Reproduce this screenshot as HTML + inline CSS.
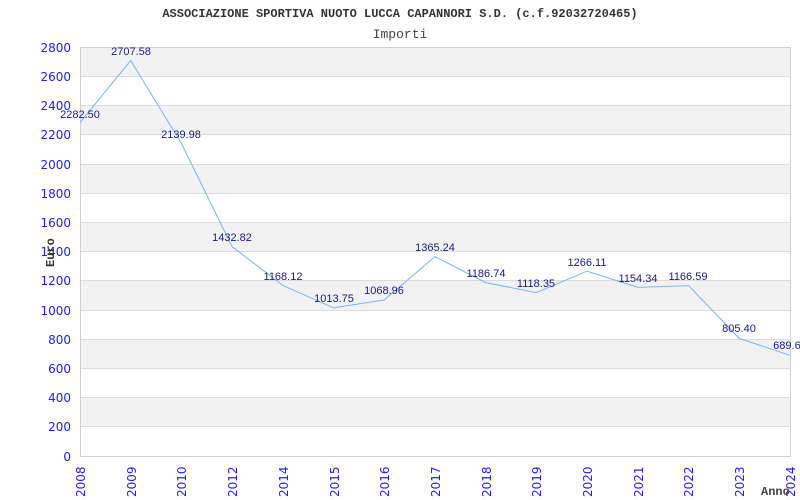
<!DOCTYPE html>
<html><head><meta charset="utf-8"><style>
html,body{margin:0;padding:0;background:#fff;width:800px;height:500px;overflow:hidden}
svg{display:block}
.yl{font:12px "DejaVu Sans","Liberation Sans",sans-serif;fill:#2020f0;text-anchor:end}
.xl{font:12px "DejaVu Sans","Liberation Sans",sans-serif;fill:#2020f0}
.dl{font:11px "Liberation Sans",sans-serif;fill:#1a1a80;text-anchor:middle}
</style></head><body>
<svg width="800" height="500" xmlns="http://www.w3.org/2000/svg">
<text x="400" y="17" text-anchor="middle" style="font:bold 12px 'Liberation Mono',monospace;fill:#333">ASSOCIAZIONE SPORTIVA NUOTO LUCCA CAPANNORI S.D. (c.f.92032720465)</text>
<text x="400" y="38" text-anchor="middle" style="font:13px 'Liberation Mono',monospace;fill:#444">Importi</text>
<g fill="#f2f2f2">
<rect x="80" y="47" width="710" height="29.2"/>
<rect x="80" y="105.4" width="710" height="29.2"/>
<rect x="80" y="163.9" width="710" height="29.2"/>
<rect x="80" y="222.3" width="710" height="29.2"/>
<rect x="80" y="280.7" width="710" height="29.2"/>
<rect x="80" y="339.1" width="710" height="29.2"/>
<rect x="80" y="397.6" width="710" height="29.2"/>
</g>
<g stroke="#dcdcdc" stroke-width="1">
<line x1="80" x2="790" y1="76.5" y2="76.5"/><line x1="80" x2="790" y1="105.5" y2="105.5"/>
<line x1="80" x2="790" y1="134.5" y2="134.5"/><line x1="80" x2="790" y1="164.5" y2="164.5"/>
<line x1="80" x2="790" y1="193.5" y2="193.5"/><line x1="80" x2="790" y1="222.5" y2="222.5"/>
<line x1="80" x2="790" y1="251.5" y2="251.5"/><line x1="80" x2="790" y1="280.5" y2="280.5"/>
<line x1="80" x2="790" y1="310.5" y2="310.5"/><line x1="80" x2="790" y1="339.5" y2="339.5"/>
<line x1="80" x2="790" y1="368.5" y2="368.5"/><line x1="80" x2="790" y1="397.5" y2="397.5"/>
<line x1="80" x2="790" y1="426.5" y2="426.5"/>
</g>
<rect x="80.5" y="47.5" width="710" height="409" fill="none" stroke="#d0d0d0"/>
<g class="yl">
<text x="71" y="52">2800</text><text x="71" y="81">2600</text><text x="71" y="110">2400</text>
<text x="71" y="139">2200</text><text x="71" y="169">2000</text><text x="71" y="198">1800</text>
<text x="71" y="227">1600</text><text x="71" y="256">1400</text><text x="71" y="285">1200</text>
<text x="71" y="315">1000</text><text x="71" y="344">800</text><text x="71" y="373">600</text>
<text x="71" y="402">400</text><text x="71" y="431">200</text><text x="71" y="461">0</text>
</g>
<text transform="translate(54,267) rotate(-90)" style="font:bold 12px 'Liberation Mono',monospace;fill:#333">Euro</text>
<g class="xl">
<text transform="translate(85,497) rotate(-90)">2008</text>
<text transform="translate(136,497) rotate(-90)">2009</text>
<text transform="translate(186,497) rotate(-90)">2010</text>
<text transform="translate(237,497) rotate(-90)">2012</text>
<text transform="translate(288,497) rotate(-90)">2014</text>
<text transform="translate(339,497) rotate(-90)">2015</text>
<text transform="translate(389,497) rotate(-90)">2016</text>
<text transform="translate(440,497) rotate(-90)">2017</text>
<text transform="translate(491,497) rotate(-90)">2018</text>
<text transform="translate(541,497) rotate(-90)">2019</text>
<text transform="translate(592,497) rotate(-90)">2020</text>
<text transform="translate(643,497) rotate(-90)">2021</text>
<text transform="translate(693,497) rotate(-90)">2022</text>
<text transform="translate(744,497) rotate(-90)">2023</text>
<text transform="translate(795,497) rotate(-90)">2024</text>
</g>
<text x="761" y="495" style="font:bold 12px 'Liberation Mono',monospace;fill:#444">Anno</text>
<polyline fill="none" stroke="#7ab4f0" stroke-width="1" points="80,122.6 130.7,60.5 181.4,143.4 232.1,246.7 282.9,285.4 333.6,307.9 384.3,299.9 435,256.6 485.7,282.6 536.4,292.6 587.1,271.1 637.9,287.4 688.6,285.6 739.3,338.4 790,355.3"/>
<g class="dl">
<text x="80" y="118">2282.50</text>
<text x="131" y="55">2707.58</text>
<text x="181" y="138">2139.98</text>
<text x="232" y="241">1432.82</text>
<text x="283" y="280">1168.12</text>
<text x="334" y="302">1013.75</text>
<text x="384" y="294">1068.96</text>
<text x="435" y="251">1365.24</text>
<text x="486" y="277">1186.74</text>
<text x="536" y="287">1118.35</text>
<text x="587" y="266">1266.11</text>
<text x="638" y="282">1154.34</text>
<text x="688" y="280">1166.59</text>
<text x="739" y="332">805.40</text>
<text x="790" y="349">689.60</text>
</g>
</svg>
</body></html>
